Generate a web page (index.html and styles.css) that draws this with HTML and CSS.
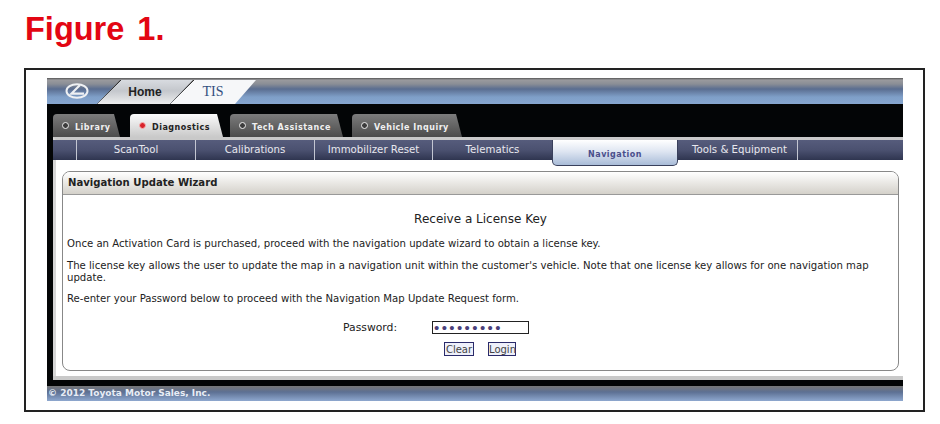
FILE: index.html
```html
<!DOCTYPE HTML>
<html>
    <head>
        <meta name="viewport" content="width=device-width, initial-scale=1.0">
        <title>Figure 1</title>
        <link rel="stylesheet" href="styles.css">
    </head>
    <body>
        <h1 class="figure-title">Figure 1.</h1>
        <div class="frame">
            <div class="app">
                <div class="topbar">
                    <svg class="logo" width="24" height="18" viewBox="0 0 24 18">
                        <ellipse cx="12" cy="9" rx="10.5" ry="6.8" fill="none" stroke="#eef0f3" stroke-width="2"/>
                        <path d="M15 3 L6.5 11.6 L19 11.6" fill="none" stroke="#eef0f3" stroke-width="2.2"/>
                    </svg>
                    <div class="top-tab home-tab">Home</div>
                    <div class="top-tab tis-tab">TIS</div>
                </div>
                <div class="tabbar">
                    <div class="tab tab-library"><span class="dot"></span>Library</div>
                    <div class="tab tab-active tab-diag"><span class="dot dot-red"></span>Diagnostics</div>
                    <div class="tab tab-tech"><span class="dot"></span>Tech Assistance</div>
                    <div class="tab tab-vehicle"><span class="dot"></span>Vehicle Inquiry</div>
                </div>
                <div class="content-wrap">
                    <div class="subnav">
                        <div class="sub sub-first"></div>
                        <div class="sub sub-scan">ScanTool</div>
                        <div class="sub sub-cal">Calibrations</div>
                        <div class="sub sub-imm">Immobilizer Reset</div>
                        <div class="sub sub-tel">Telematics</div>
                        <div class="sub-active">Navigation</div>
                        <div class="sub sub-tools">Tools &amp; Equipment</div>
                    </div>
                    <div class="panel">
                        <div class="panel-head">Navigation Update Wizard</div>
                        <div class="panel-body">
                            <h2 class="receive">Receive a License Key</h2>
                            <p class="para-first">Once an Activation Card is purchased, proceed with the navigation update wizard to obtain a license key.</p>
                            <p>The license key allows the user to update the map in a navigation unit within the customer's vehicle. Note that one license key allows for one navigation map update.</p>
                            <p>Re-enter your Password below to proceed with the Navigation Map Update Request form.</p>
                            <div class="pass-row">
                                <label for="pw">Password:</label>
                                <input id="pw" class="pass" type="password" value="123456789">
                            </div>
                            <div class="btn-row">
                                <button class="btn btn-clear">Clear</button>
                                <button class="btn btn-login">Login</button>
                            </div>
                        </div>
                    </div>
                    <div class="content-foot"></div>
                </div>
                <div class="footer">© 2012 Toyota Motor Sales, Inc.</div>
            </div>
        </div>
    </body>
</html>
```

FILE: styles.css
```css
body{
    margin: 0;
    background: #fff;
    font-family: "DejaVu Sans", Verdana, sans-serif;
}
.figure-title{
    margin: 0;
    padding: 11px 0 0 25px;
    height: 68px;
    box-sizing: border-box;
    font-family: "Liberation Sans", Arial, sans-serif;
    font-size: 32.5px;
    line-height: 37px;
    font-weight: bold;
    word-spacing: 4px;
    color: #e30613;
}
.frame{
    margin-left: 24px;
    width: 901px;
    height: 344px;
    box-sizing: border-box;
    border: 2px solid #222;
    padding: 8px 0 0 21px;
}
.app{
    width: 856px;
    background: #030506;
}
.topbar{
    height: 26px;
    display: flex;
    align-items: flex-end;
    background: linear-gradient(#555 0,#9a9a9e 2px,#8a8e96 6px,#5a6d90 11px,#7f9fc8 19px,#86a6cf 26px);
}
.logo{
    margin: 0 8px 4px 18px;
    flex: none;
}
.top-tab{
    height: 24px;
    box-sizing: border-box;
    font-size: 12px;
    line-height: 24px;
    text-align: center;
    font-family: "Liberation Sans", Arial, sans-serif;
    font-weight: bold;
}
.home-tab{
    width: 96px;
    color: #222;
    background: linear-gradient(135deg,#333 0 17.4px,transparent 17.4px),linear-gradient(#d8dbe0,#c4c7cc 45%,#eceded);
    clip-path: polygon(23px 0,100% 0,73px 100%,0 100%);
}
.tis-tab{
    width: 86px;
    margin-left: -23px;
    font-family: "Liberation Serif", serif;
    font-size: 14px;
    font-weight: normal;
    color: #33507f;
    background: linear-gradient(135deg,#333 0 17.4px,transparent 17.4px),linear-gradient(#f6f7f9,#f6f7f9);
    clip-path: polygon(23px 0,100% 0,65px 100%,0 100%);
}
.tabbar{
    height: 33px;
    display: flex;
    align-items: flex-end;
    padding-left: 6px;
    box-sizing: border-box;
}
.tab{
    height: 23px;
    padding: 3px 0 0 9px;
    display: flex;
    align-items: center;
    box-sizing: border-box;
    font-size: 8px;
    font-weight: bold;
    letter-spacing: 0.5px;
    color: #f0f0f0;
    background: linear-gradient(#7c7c7c,#4c4c4c);
    border-radius: 4px 4px 0 0;
    clip-path: polygon(0 0,calc(100% - 6px) 0,100% 100%,0 100%);
}
.tab-library{
    width: 67px;
}
.tab-active{
    color: #222;
    background: linear-gradient(#fbfbfb,#c9c9c9);
}
.tab-diag{
    width: 93px;
    margin-left: 10px;
}
.tab-tech{
    width: 113px;
    margin-left: 7px;
}
.tab-vehicle{
    width: 110px;
    margin-left: 9px;
}
.dot{
    width: 7px;
    height: 7px;
    margin: -4px 6px 0 0;
    border-radius: 50%;
    background: #3c3c3c;
    border: 1px solid #eee;
    box-sizing: border-box;
}
.dot-red{
    background: #d8232a;
    border-color: #f4b5b5;
}
.content-wrap{
    margin: 0 0 6px 6px;
    background: #fff;
    border-top: 3px solid #c9c9c9;
    border-left: 3px solid #d6d6d6;
}
.subnav{
    height: 20px;
    display: flex;
    margin-left: -3px;
    background: linear-gradient(#565c7c,#4b5170 50%,#2f3550);
    color: #e8e8ee;
    font-size: 10.2px;
    line-height: 19px;
    text-align: center;
}
.sub{
    box-sizing: border-box;
    border-right: 1px solid #c3c6d2;
}
.sub-first{
    width: 24px;
}
.sub-scan{
    width: 119px;
}
.sub-cal{
    width: 119px;
}
.sub-imm{
    width: 118px;
}
.sub-tel{
    width: 119px;
    border-right: 0;
}
.sub-active{
    width: 126px;
    height: 26px;
    flex: none;
    box-sizing: border-box;
    padding-top: 5px;
    font-size: 8px;
    font-weight: bold;
    letter-spacing: 0.5px;
    color: #4a4f8c;
    background: linear-gradient(#fff,#dfe6f2 45%,#a9bcd8);
    border: 1px solid #39405c;
    border-top: 0;
    border-radius: 0 0 5px 5px;
}
.sub-tools{
    width: 120px;
    padding-left: 4px;
}
.panel{
    margin: 11px 4px 0 6px;
    height: 200px;
    box-sizing: border-box;
    border: 1px solid #888;
    border-radius: 8px;
    overflow: hidden;
}
.panel-head{
    height: 23px;
    padding-left: 5px;
    font-size: 10.1px;
    font-weight: bold;
    line-height: 22px;
    color: #222;
    background: linear-gradient(#fff,#d4d1ca);
    border-bottom: 1px solid #999;
    box-sizing: border-box;
}
.panel-body{
    font-size: 10.15px;
    color: #222;
}
.receive{
    margin: 17px 0 0;
    text-align: center;
    font-size: 12px;
    font-weight: normal;
    line-height: 14px;
}
.panel-body p{
    margin: 9px 4px 0;
    line-height: 12px;
}
.panel-body .para-first{
    margin-top: 12px;
    margin-bottom: 10px;
}
.pass-row{
    display: flex;
    margin: 16px 0 0 280px;
}
.pass-row label{
    width: 89px;
    font-size: 10.8px;
    line-height: 13px;
}
.pass{
    width: 97px;
    height: 13px;
    box-sizing: border-box;
    padding: 0 1px;
    border: 1px solid #222;
    font-size: 15px;
    letter-spacing: 2.4px;
    color: #4a3f7a;
}
.btn-row{
    display: flex;
    gap: 14px;
    margin: 8px 0 0 381px;
}
.btn{
    height: 14px;
    padding: 0;
    border: 1px solid #2a2a6a;
    background: #eef0fa;
    font-family: inherit;
    font-size: 10px;
    color: #444;
}
.btn-clear{
    width: 30px;
}
.btn-login{
    width: 28px;
}
.content-foot{
    height: 9px;
    margin-left: -3px;
    box-sizing: border-box;
    border-bottom: 4px solid #c9c9c9;
}
.footer{
    height: 15px;
    padding-left: 1px;
    font-size: 9px;
    font-weight: bold;
    line-height: 15px;
    color: #e8edf5;
    background: linear-gradient(#777,#5d7093 40%,#8ea8cf);
}
```
